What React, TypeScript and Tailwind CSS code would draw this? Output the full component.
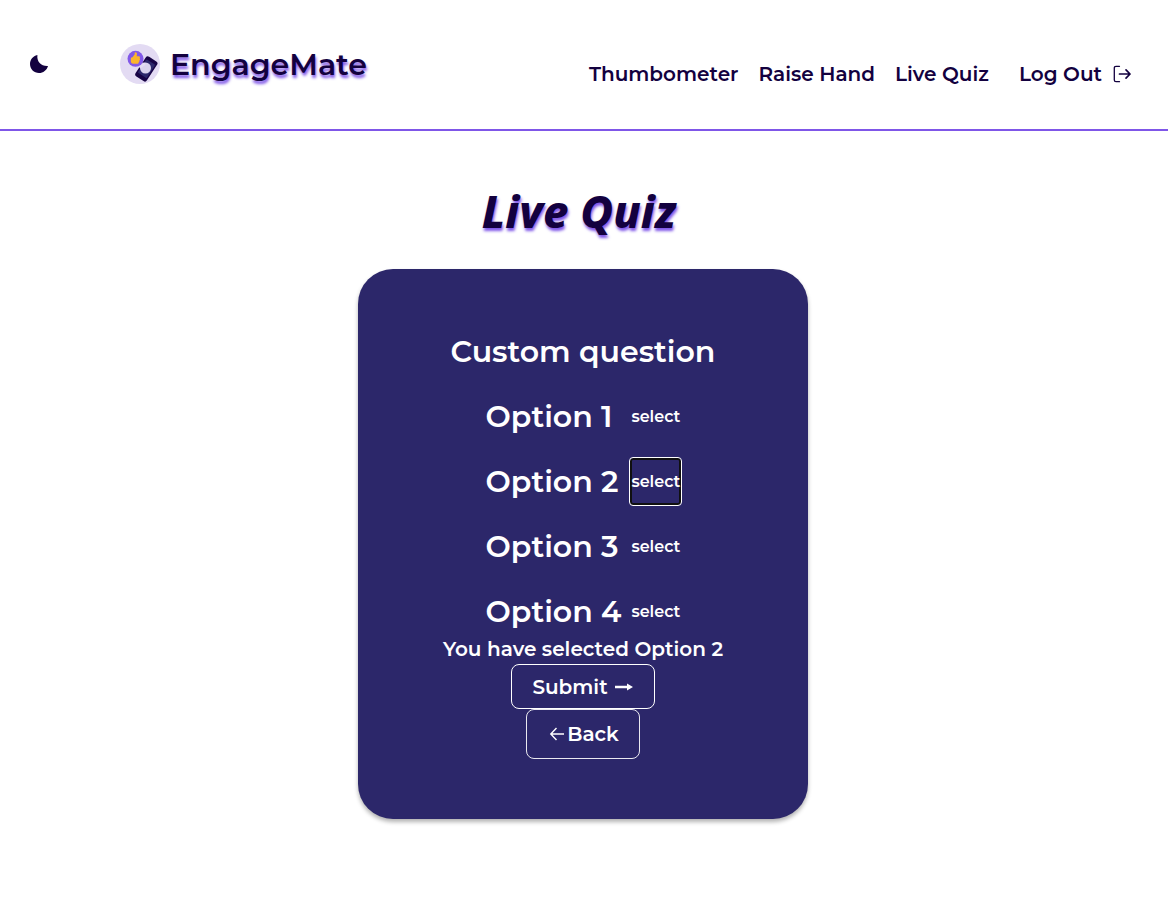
import { useState } from "react";

const options = ["Option 1", "Option 2", "Option 3", "Option 4"];

function MoonIcon() {
  return (
    <svg viewBox="0 0 20 20" className="size-5" fill="currentColor" aria-hidden="true">
      <path d="M8.400 1C3.900 2.200 1 5.800 1 10C1 15 5 19 10 19C14.200 19 17.800 16.300 19 12C12.500 12.500 7.600 8 8.400 1Z" />
    </svg>
  );
}

function Logo() {
  return (
    <svg viewBox="0 0 40 40" className="size-10 shrink-0" aria-hidden="true">
      <circle cx="20" cy="20" r="20" fill="#e3dbf3" />
      <g transform="rotate(33 26 25)">
        <rect x="19.500" y="13" width="13.500" height="23.500" rx="2.500" fill="#170345" />
        <rect x="21" y="16.500" width="10.500" height="16" rx="1" fill="#2c276a" />
      </g>
      <circle cx="25.500" cy="24" r="5.500" fill="#d9d2ed" />
      <path d="M20.500 22.500L24 20" stroke="#e3dbf3" strokeWidth="3" strokeLinecap="round" />
      <circle cx="15.500" cy="14.800" r="8" fill="#8258e8" />
      <path
        d="M10.800 14.400Q11 13.400 12.500 13.300L14.700 10.200V8.700C15 7.600 17 8.200 17 9.800L16.700 12.200H18.800C20.200 12.200 20.300 13.700 19.600 14.200C20.300 14.900 20.100 15.900 19.400 16.200C19.800 17 19.400 17.700 18.800 17.900C18.900 18.900 18.300 19.700 17.200 19.700H13.500C11.500 19.700 10.800 18.500 10.800 17Z"
        fill="#fbb52d"
      />
    </svg>
  );
}

function ExitIcon() {
  return (
    <svg viewBox="0 0 20 20" className="size-5" fill="none" stroke="currentColor" strokeLinecap="round" strokeLinejoin="round" aria-hidden="true">
      <path d="M7.500 2.300H4Q2.300 2.300 2.300 4V16Q2.300 17.700 4 17.700H7.500" strokeWidth="1.300" />
      <path d="M7.500 10H18M14 5.800L18 10L14 14.200" strokeWidth="1.700" />
    </svg>
  );
}

export default function App() {
  const [selected, setSelected] = useState("Option 2");
  return (
    <div className="min-h-screen bg-white font-['Montserrat','Inter',sans-serif] font-semibold text-[#13013f]">
      <header className="flex h-[131px] items-center justify-between border-b-2 border-[#7f56e8] pr-9 pb-0.5 pl-7">
        <div className="flex items-center gap-[70px]">
          <button type="button" aria-label="Toggle dark mode" className="flex size-[22px] items-center justify-center">
            <MoonIcon />
          </button>
          <a href="#" className="flex items-center gap-[10px] text-[30px] leading-9 [text-shadow:1px_3px_3px_#7f56e8]">
            <Logo />
            <span className="pt-0.5">EngageMate</span>
          </a>
        </div>
        <nav className="mt-5 flex items-center gap-5 text-xl leading-6">
          <a href="#">Thumbometer</a>
          <a href="#">Raise Hand</a>
          <a href="#">Live Quiz</a>
          <a href="#" className="ml-[10px] flex items-center gap-[10px]">
            Log Out
            <ExitIcon />
          </a>
        </nav>
      </header>
      <main className="flex flex-col items-center pt-[50px] pr-0.5">
        <h1 className="pr-2 font-['Noto_Sans',sans-serif] text-[45px] leading-[60px] font-extrabold italic [text-shadow:1px_3px_3px_#7f56e8]">
          Live Quiz
        </h1>
        <section className="mt-7 flex w-full max-w-[450px] flex-col items-center rounded-[35px] bg-[#2c276a] py-[60px] text-white shadow-[0_3px_4px_rgba(0,0,0,0.3)]">
          <h2 className="py-[3px] text-[30px] leading-10">Custom question</h2>
          <ul className="mt-[17px] flex flex-col gap-4 pl-0.5">
            {options.map((option) => (
              <li key={option} className="flex h-[49px] items-center justify-between gap-2">
                <span className="text-[30px] leading-10">{option}</span>
                <button
                  type="button"
                  aria-label={`select ${option}`}
                  aria-pressed={selected === option}
                  onClick={() => setSelected(option)}
                  className={
                    selected === option
                      ? "h-[49px] w-[53px] rounded border border-white text-center text-base ring-2 ring-[#101010] ring-inset"
                      : "h-[49px] w-[53px] rounded border border-transparent text-center text-base"
                  }
                >
                  select
                </button>
              </li>
            ))}
          </ul>
          <p className="text-xl leading-[26px]">You have selected {selected}</p>
          <button type="submit" className="mt-0.5 flex h-[45px] items-center gap-1.5 rounded-lg border border-white px-5 text-xl">
            Submit
            <svg viewBox="0 0 20 10" className="h-[10px] w-5" aria-hidden="true">
              <path d="M1 3.800H13V1.500L19 5L13 8.500V6.200H1Z" fill="currentColor" />
            </svg>
          </button>
          <button type="button" className="flex h-[50px] items-center gap-[2px] rounded-lg border border-white/90 px-5 text-xl">
            <svg viewBox="0 0 18 18" className="size-[18px]" fill="none" stroke="currentColor" strokeWidth="1.400" aria-hidden="true">
              <path d="M17 9H4M9.500 3L3.800 9L9.500 15" />
            </svg>
            Back
          </button>
        </section>
      </main>
    </div>
  );
}
